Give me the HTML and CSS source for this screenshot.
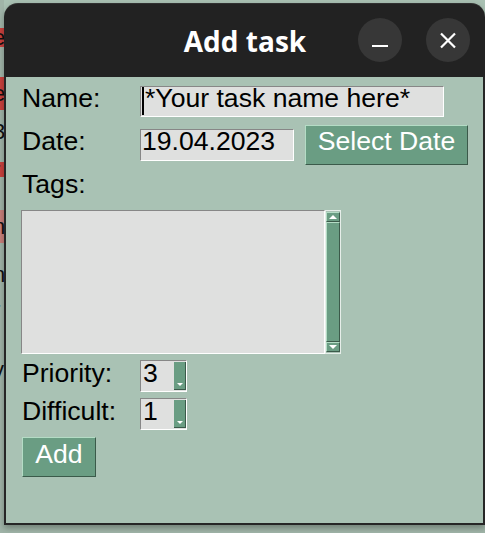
FILE: index.html
```html
<!DOCTYPE html>
<html>
<head>
<meta charset="utf-8">
<link rel="stylesheet" href="styles.css">
</head>
<body>
<div class="screen">
  <div class="behind">
    <div class="gap h28"></div>
    <div class="bl red h19"><span>e</span></div>
    <div class="gap h30"></div>
    <div class="bl red h33"><span>e</span></div>
    <div class="gap h12"></div>
    <div class="bl h20"><span>3</span></div>
    <div class="gap h20"></div>
    <div class="bl red h15"><span>r</span></div>
    <div class="gap h33"></div>
    <div class="bl pink h33"><span>n</span></div>
    <div class="gap h23"></div>
    <div class="bl h18"><span>n</span></div>
    <div class="gap h18"></div>
    <div class="bl h16"><span>r</span></div>
    <div class="gap h40"></div>
    <div class="bl h24"><span>y</span></div>
  </div>
  <div class="window">
    <div class="titlebar">
      <div class="tb-side"></div>
      <div class="tb-title">Add task</div>
      <div class="tb-buttons">
        <div class="tb-btn">
          <svg width="44" height="44" viewBox="0 0 44 44"><rect x="14" y="27" width="16" height="2" fill="#ffffff"/></svg>
        </div>
        <div class="tb-btn">
          <svg width="44" height="44" viewBox="0 0 44 44"><path d="M15 15.5 L29 29.5 M29 15.5 L15 29.5" stroke="#ffffff" stroke-width="2.2" fill="none"/></svg>
        </div>
      </div>
    </div>
    <div class="content">
      <div class="row row-name">
        <span class="label">Name:</span>
        <div class="entry entry-name"><span class="cursor"></span>*Your task name here*</div>
      </div>
      <div class="row row-date">
        <span class="label">Date:</span>
        <div class="entry entry-date">19.04.2023</div>
        <div class="tkbtn btn-date">Select Date</div>
      </div>
      <div class="label label-tags">Tags:</div>
      <div class="tags">
        <div class="textarea"></div>
        <div class="scrollbar">
          <div class="sb-arrow"><span class="tri-up"></span></div>
          <div class="sb-slider"></div>
          <div class="sb-arrow"><span class="tri-down"></span></div>
        </div>
      </div>
      <div class="row row-spin first">
        <span class="label">Priority:</span>
        <div class="spin"><span class="spin-val">3</span><span class="spin-arrows"><span class="tri-small"></span></span></div>
      </div>
      <div class="row row-spin">
        <span class="label">Difficult:</span>
        <div class="spin"><span class="spin-val">1</span><span class="spin-arrows"><span class="tri-small"></span></span></div>
      </div>
      <div class="tkbtn btn-add">Add</div>
    </div>
  </div>
</div>
</body>
</html>
```
FILE: styles.css
```css
html, body {
  margin: 0;
  padding: 0;
}
body {
  width: 485px;
  height: 533px;
  overflow: hidden;
  background: #9fb4a7;
}
.screen {
  display: flex;
  align-items: flex-start;
  width: 485px;
  height: 533px;
  background: linear-gradient(#a9c1b3 0, #a9c1b3 20px, #a0b5a8 40px);
  overflow: hidden;
}

/* background application strip */
.behind {
  width: 4px;
  flex: none;
  height: 533px;
  background: #a0b4a8;
  display: flex;
  flex-direction: column;
  overflow: hidden;
  font-family: "Liberation Sans", Arial, sans-serif;
  font-size: 22px;
  color: #111;
}
.behind .bl {
  display: flex;
  align-items: center;
  overflow: hidden;
}
.behind .bl span {
  margin-left: -7px;
  line-height: 1;
}
.red { background: #c9413d; }
.pink { background: #c77f7a; }
.h12 { height: 12px; } .h15 { height: 15px; } .h16 { height: 16px; }
.h18 { height: 18px; } .h19 { height: 19px; } .h20 { height: 20px; }
.h23 { height: 23px; } .h24 { height: 24px; } .h28 { height: 28px; }
.h30 { height: 30px; } .h33 { height: 33px; } .h40 { height: 40px; }

/* window */
.window {
  width: 481px;
  height: 522px;
  margin-top: 3px;
  flex: none;
  display: flex;
  flex-direction: column;
  box-shadow: 0 3px 6px rgba(0, 0, 0, 0.3);
  border-radius: 14px 14px 0 0;
}
.titlebar {
  height: 74px;
  flex: none;
  background: #222222;
  border-radius: 14px 14px 0 0;
  box-shadow: inset 0 1px 0 rgba(255, 255, 255, 0.07);
  display: grid;
  grid-template-columns: 1fr auto 1fr;
  align-items: center;
}
.tb-title {
  font-family: "Open Sans", "Noto Sans", sans-serif;
  font-weight: 700;
  font-size: 28px;
  color: #ffffff;
  margin-top: 2px;
  margin-left: 1px;
}
.tb-buttons {
  justify-self: end;
  display: flex;
  gap: 24px;
  padding-right: 15px;
}
.tb-btn {
  width: 44px;
  height: 44px;
  border-radius: 50%;
  background: #373737;
}
.tb-btn svg {
  display: block;
}

.content {
  flex: 1;
  background: #a9c2b4;
  border: 2px solid #262626;
  border-top: none;
  padding: 9px 0 0 15px;
  font-family: "Liberation Sans", Arial, sans-serif;
  font-size: 26.6px;
  color: #000;
}
.row {
  display: flex;
  align-items: baseline;
}
.label {
  width: 119px;
  flex: none;
  box-sizing: border-box;
  padding-left: 1px;
  line-height: 22px;
}
.entry {
  box-sizing: border-box;
  height: 31px;
  border: 1px solid;
  border-color: #878787 #ffffff #ffffff #878787;
  background: #dfe0df;
  line-height: 22px;
  padding-left: 1px;
  white-space: nowrap;
  overflow: hidden;
}
.entry-name {
  width: 304px;
}
.cursor {
  display: inline-block;
  width: 2px;
  height: 28px;
  background: #000;
  vertical-align: -8px;
  margin-right: 1px;
}
.entry-date {
  width: 154px;
  height: 32px;
}
.row-date {
  margin-top: 8px;
}
.tkbtn {
  box-sizing: border-box;
  height: 40px;
  border: 1px solid;
  border-color: #b4dcc5 #3b5a4a #3b5a4a #b4dcc5;
  background: #6a9d83;
  color: #ffffff;
  line-height: 22px;
  text-align: center;
  white-space: nowrap;
}
.btn-date {
  width: 163px;
  margin-left: 11px;
  padding-top: 4px;
}
.label-tags {
  margin-top: 8px;
}
.tags {
  display: flex;
  margin-top: 15px;
}
.textarea {
  box-sizing: border-box;
  width: 304px;
  height: 144px;
  background: #dfe0df;
  border: 1px solid;
  border-color: #878787 #ffffff #ffffff #878787;
}
.scrollbar {
  box-sizing: border-box;
  width: 16px;
  height: 144px;
  border: 1px solid #e6eee9;
  display: flex;
  flex-direction: column;
  padding: 1px 0;
}
.sb-arrow {
  box-sizing: border-box;
  height: 10px;
  flex: none;
  background: #6a9d83;
  border: 1px solid;
  border-color: #b4dcc5 #3b5a4a #3b5a4a #b4dcc5;
  display: flex;
  align-items: center;
  justify-content: center;
}
.sb-slider {
  flex: 1;
  background: #6a9d83;
  border: 1px solid;
  border-color: #b4dcc5 #3b5a4a #3b5a4a #b4dcc5;
}
.tri-up {
  width: 0;
  height: 0;
  border-left: 4px solid transparent;
  border-right: 4px solid transparent;
  border-bottom: 4px solid #ffffff;
}
.tri-down {
  width: 0;
  height: 0;
  border-left: 4px solid transparent;
  border-right: 4px solid transparent;
  border-top: 4px solid #ffffff;
}
.row-spin {
  margin-top: 6px;
}
.spin {
  box-sizing: border-box;
  display: flex;
  width: 47px;
  height: 32px;
  border: 1px solid;
  border-color: #878787 #ffffff #ffffff #878787;
  background: #dfe0df;
}
.spin-val {
  flex: 1;
  padding: 1px 0 0 2px;
  line-height: 22px;
}
.spin-arrows {
  box-sizing: border-box;
  width: 12px;
  flex: none;
  margin: 1px 0;
  background: #6a9d83;
  border-right: 1px solid #3b5a4a;
  border-bottom: 1px solid #3b5a4a;
  display: flex;
  align-items: flex-end;
  justify-content: center;
  padding-bottom: 3px;
}
.tri-small {
  width: 0;
  height: 0;
  border-left: 3px solid transparent;
  border-right: 3px solid transparent;
  border-top: 3px solid #ffffff;
}
.btn-add {
  width: 74px;
  margin-top: 7px;
  margin-left: 1px;
  padding-top: 5px;
}
```
